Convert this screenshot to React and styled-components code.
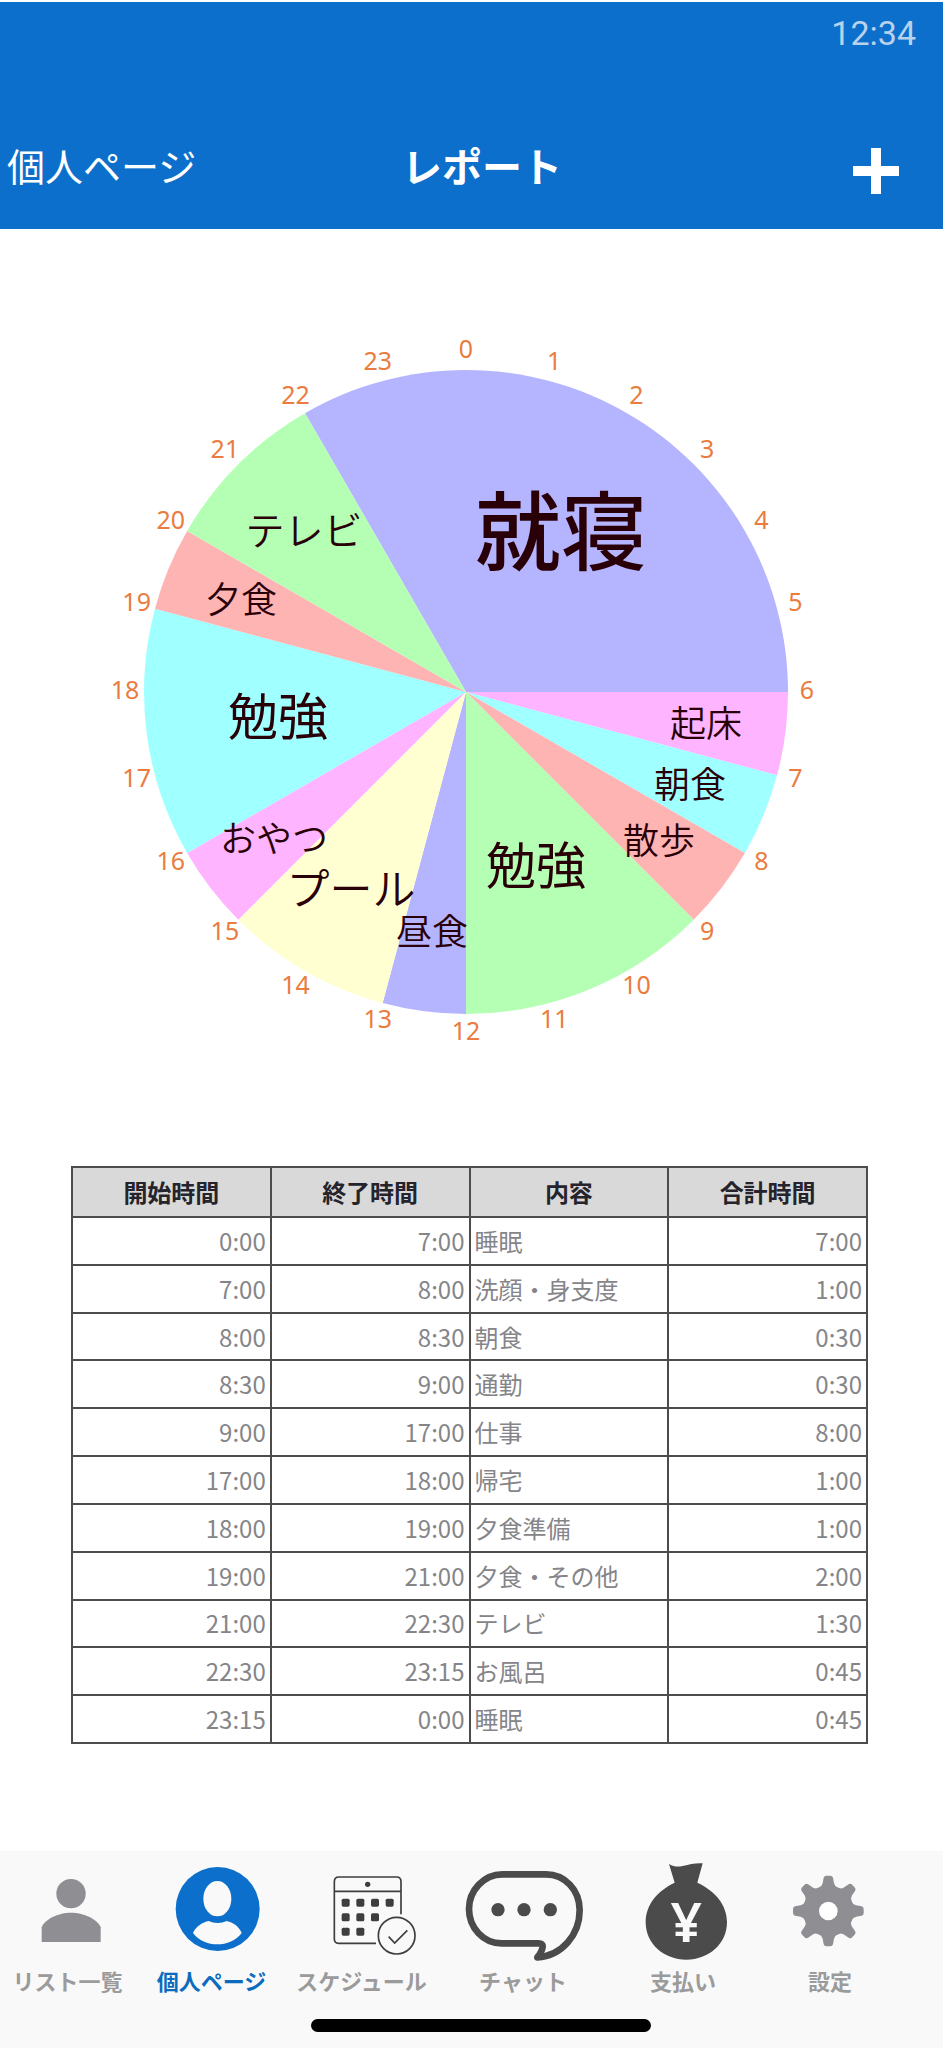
import React from "react";
import styled, { createGlobalStyle } from "styled-components";

const GlobalStyle = createGlobalStyle`
  *, *::before, *::after { box-sizing: border-box; }
  body {
    margin: 0;
    background: #fff;
    font-family: "Noto Sans CJK JP", sans-serif;
  }
`;

const Page = styled.div`
  display: flex;
  flex-direction: column;
  min-height: 100vh;
  padding: 2px 2px 0 0;
`;

const Header = styled.header`
  display: flex;
  flex-direction: column;
  height: 227px;
  background: #0b6fcb;
  color: #fff;
`;

const StatusBar = styled.div`
  display: flex;
  justify-content: flex-end;
  padding: 11px 27px 0 0;
  height: 104px;
  font-family: Roboto, sans-serif;
  font-size: 34px;
  font-weight: 400;
  line-height: 40px;
  color: #b9d2ec;
`;

const NavBar = styled.div`
  display: grid;
  grid-template-columns: 1fr auto 1fr;
  align-items: center;
  height: 118px;
  padding: 0 44px 0 7px;
`;

const BackLink = styled.a`
  color: inherit;
  font-size: 38px;
  line-height: 56px;
  text-decoration: none;
`;

const Title = styled.h1`
  margin: 0 0 0 58px;
  font-size: 40px;
  font-weight: 700;
  line-height: 56px;
`;

const AddButton = styled.button`
  justify-self: end;
  width: 46px;
  height: 46px;
  margin-top: 12px;
  padding: 0;
  border: 0;
  background: none;
  color: inherit;

  svg { display: block; width: 100%; height: 100%; }
`;

const Main = styled.main`
  flex: 1;
`;

const Chart = styled.svg`
  display: block;
  width: 100%;
  height: auto;
`;

const HourLabel = styled.text`
  font-family: "Noto Sans", sans-serif;
  font-size: 25px;
  fill: #ea7c40;
  text-anchor: middle;
`;

const SliceLabel = styled.text`
  font-size: ${(p) => p.$size}px;
  font-weight: ${(p) => p.$weight};
  fill: #2a0008;
  text-anchor: middle;
`;

const TableSection = styled.section`
  padding: 38px 75px 106px 71px;
`;

const Table = styled.table`
  width: 100%;
  height: 578px;
  table-layout: fixed;
  border-collapse: collapse;
  font-size: 24px;
  line-height: 36px;
`;

const HeadCell = styled.th`
  padding: 6px 4px;
  border: 2px solid #4c4c4c;
  background: #d9d9d9;
  color: #25232b;
  font-weight: 700;
`;

const Cell = styled.td`
  padding: 4px;
  border: 2px solid #4c4c4c;
  color: #858589;
  text-align: ${(p) => (p.$text ? "left" : "right")};
`;

const Footer = styled.footer`
  height: 197px;
  background: #f9f9f9;
`;

const TabBar = styled.nav`
  display: grid;
  grid-template-columns: 135fr 153fr 147fr 176fr 144fr 150fr 38fr;
  height: 168px;
`;

const Tab = styled.a`
  display: flex;
  flex-direction: column;
  align-items: center;
  font-size: 22px;
  font-weight: 700;
  line-height: 38px;
  white-space: nowrap;
  text-decoration: none;
  color: ${(p) => (p.$active ? "#0b6cbf" : "#9b9b9b")};
`;

const TabIcon = styled.svg`
  flex: none;
  width: 120px;
  height: 110px;
`;

const HomeIndicator = styled.div`
  width: 36%;
  height: 13px;
  margin-left: 33%;
  border-radius: 7px;
  background: #000;
`;

const RADIUS = 322;

const slices = [
  { from: 22, to: 30, color: "#b4b4ff", label: "就寝", x: 95, y: -161, size: 86, weight: 500 },
  { from: 6, to: 7, color: "#ffb4ff", label: "起床", x: 240, y: 31, size: 36, weight: 350 },
  { from: 7, to: 8, color: "#a0ffff", label: "朝食", x: 224, y: 92, size: 36, weight: 350 },
  { from: 8, to: 9, color: "#ffb4b4", label: "散歩", x: 193, y: 148, size: 36, weight: 350 },
  { from: 9, to: 12, color: "#b4ffb4", label: "勉強", x: 70, y: 173, size: 50, weight: 400 },
  { from: 12, to: 13, color: "#b4b4ff", label: "昼食", x: -34, y: 239, size: 36, weight: 350 },
  { from: 13, to: 15, color: "#ffffd2", label: "プール", x: -115, y: 197, size: 43, weight: 350 },
  { from: 15, to: 16, color: "#ffb4ff", label: "おやつ", x: -192, y: 146, size: 36, weight: 350 },
  { from: 16, to: 19, color: "#a0ffff", label: "勉強", x: -188, y: 24, size: 50, weight: 400 },
  { from: 19, to: 20, color: "#ffb4b4", label: "夕食", x: -225, y: -93, size: 36, weight: 350 },
  { from: 20, to: 22, color: "#b4ffb4", label: "テレビ", x: -162, y: -162, size: 39, weight: 350 },
];

const pointAt = (hour, radius) => {
  const angle = (hour / 24) * Math.PI * 2;
  return [Math.sin(angle) * radius, -Math.cos(angle) * radius];
};

const slicePath = ({ from, to }) => {
  const [x1, y1] = pointAt(from, RADIUS);
  const [x2, y2] = pointAt(to, RADIUS);
  return `M0 0L${x1} ${y1}A${RADIUS} ${RADIUS} 0 0 1 ${x2} ${y2}Z`;
};

function DayChart() {
  return (
    <Chart viewBox="-466 -463 943 899" role="img" aria-label="一日のスケジュール">
      {slices.map((s) => (
        <path key={s.from} d={slicePath(s)} fill={s.color} />
      ))}
      {Array.from({ length: 24 }, (_, hour) => {
        const [x, y] = pointAt(hour, 341);
        return (
          <HourLabel key={hour} x={x} y={y + 7}>
            {hour}
          </HourLabel>
        );
      })}
      {slices.map((s) => (
        <SliceLabel
          key={s.from}
          x={s.x}
          y={s.y + Math.round(s.size * 0.38)}
          $size={s.size}
          $weight={s.weight}
        >
          {s.label}
        </SliceLabel>
      ))}
    </Chart>
  );
}

const rows = [
  ["0:00", "7:00", "睡眠", "7:00"],
  ["7:00", "8:00", "洗顔・身支度", "1:00"],
  ["8:00", "8:30", "朝食", "0:30"],
  ["8:30", "9:00", "通勤", "0:30"],
  ["9:00", "17:00", "仕事", "8:00"],
  ["17:00", "18:00", "帰宅", "1:00"],
  ["18:00", "19:00", "夕食準備", "1:00"],
  ["19:00", "21:00", "夕食・その他", "2:00"],
  ["21:00", "22:30", "テレビ", "1:30"],
  ["22:30", "23:15", "お風呂", "0:45"],
  ["23:15", "0:00", "睡眠", "0:45"],
];

function TimeTable() {
  return (
    <Table>
      <thead>
        <tr>
          {["開始時間", "終了時間", "内容", "合計時間"].map((h) => (
            <HeadCell key={h} scope="col">{h}</HeadCell>
          ))}
        </tr>
      </thead>
      <tbody>
        {rows.map((row) => (
          <tr key={row[0]}>
            {row.map((value, i) => (
              <Cell key={i} $text={i === 2}>{value}</Cell>
            ))}
          </tr>
        ))}
      </tbody>
    </Table>
  );
}

const PersonIcon = () => (
  <TabIcon viewBox="22 33 360 330" fill="#8e8e93" aria-hidden="true">
    <circle cx="211" cy="161" r="44" />
    <path d="M123 306V262C133 236 175 218 211 218S290 236 300 262V306Z" />
  </TabIcon>
);

const ProfileIcon = () => (
  <TabIcon viewBox="454 33 360 330" aria-hidden="true">
    <circle cx="651" cy="207" r="126" fill="#0b6fcb" />
    <g fill="#f9f9f9">
      <ellipse cx="650" cy="176" rx="42" ry="53" />
      <path d="M577 279C586 259 606 247 624 243C640 251 662 251 678 243C697 247 716 260 723 279C706 302 678 313 650 313S594 302 577 279Z" />
    </g>
  </TabIcon>
);

const calendarDays = [
  [183, 176], [227, 176], [271, 176], [315, 176],
  [183, 220], [227, 220], [271, 220],
  [183, 263], [227, 263],
];

const CalendarIcon = () => (
  <TabIcon viewBox="64 33 360 330" aria-hidden="true">
    <g fill="none" stroke="#403d3d" strokeWidth="5">
      <path d="M286 310H174Q161 310 161 297V125Q161 111 174 111H348Q361 111 361 125V223" />
      <path d="M161 154H361" />
      <circle cx="348" cy="287" r="55" />
      <path d="M324 290L342 309L380 271" />
    </g>
    <g fill="#403d3d">
      <circle cx="261" cy="133" r="8" />
      {calendarDays.map(([x, y]) => (
        <rect key={`${x}-${y}`} x={x} y={y} width="24" height="24" rx="5" />
      ))}
    </g>
  </TabIcon>
);

const ChatIcon = () => (
  <TabIcon viewBox="549 33 360 330" aria-hidden="true">
    <path
      d="M775 310H665C610 310 567 263 567 207S612 103 667 103H798C855 103 899 150 899 210C899 285 845 348 772 352C780 342 787 332 788 320Q788 310 775 310Z"
      fill="none"
      stroke="#4b4b4b"
      strokeWidth="20"
      strokeLinejoin="round"
    />
    <g fill="#4b4b4b">
      <circle cx="654" cy="209" r="20" />
      <circle cx="732" cy="209" r="20" />
      <circle cx="811" cy="209" r="20" />
    </g>
  </TabIcon>
);

const YenSign = styled.text`
  font-family: "Noto Sans", sans-serif;
  font-size: 165px;
  font-weight: 600;
  fill: #f9f9f9;
  text-anchor: middle;
`;

const MoneyIcon = () => (
  <TabIcon viewBox="69 33 360 330" aria-hidden="true">
    <path
      d="M224 128L207 72C240 92 262 66 308 70L292 128C345 152 381 195 381 246C381 312 326 359 259 359S137 312 137 246C137 195 172 152 224 128Z"
      fill="#4b4b4b"
    />
    <YenSign x="259" y="305">¥</YenSign>
  </TabIcon>
);

const GearIcon = () => (
  <TabIcon viewBox="510 33 360 330" aria-hidden="true">
    <g fill="#8e8e93">
      <circle cx="685" cy="213" r="76" />
      {[0, 45, 90, 135, 180, 225, 270, 315].map((deg) => (
        <path
          key={deg}
          d="M655 145Q666 139 668 130L671 113Q673 107 679 107H691Q697 107 699 113L702 130Q704 139 715 145Z"
          transform={`rotate(${deg} 685 213)`}
        />
      ))}
    </g>
    <circle cx="685" cy="213" r="28" fill="#fff" />
  </TabIcon>
);

const tabs = [
  { label: "リスト一覧", Icon: PersonIcon },
  { label: "個人ページ", Icon: ProfileIcon, active: true },
  { label: "スケジュール", Icon: CalendarIcon },
  { label: "チャット", Icon: ChatIcon },
  { label: "支払い", Icon: MoneyIcon },
  { label: "設定", Icon: GearIcon },
];

export default function App() {
  return (
    <Page lang="ja">
      <GlobalStyle />
      <Header>
        <StatusBar>12:34</StatusBar>
        <NavBar>
          <BackLink href="#profile">個人ページ</BackLink>
          <Title>レポート</Title>
          <AddButton type="button" aria-label="追加">
            <svg viewBox="0 0 46 46" aria-hidden="true">
              <path d="M23 0V46M0 23H46" stroke="currentColor" strokeWidth="10" />
            </svg>
          </AddButton>
        </NavBar>
      </Header>
      <Main>
        <DayChart />
        <TableSection>
          <TimeTable />
        </TableSection>
      </Main>
      <Footer>
        <TabBar>
          {tabs.map(({ label, Icon, active }) => (
            <Tab key={label} href="#tab" $active={active} aria-current={active ? "page" : undefined}>
              <Icon />
              {label}
            </Tab>
          ))}
        </TabBar>
        <HomeIndicator />
      </Footer>
    </Page>
  );
}
